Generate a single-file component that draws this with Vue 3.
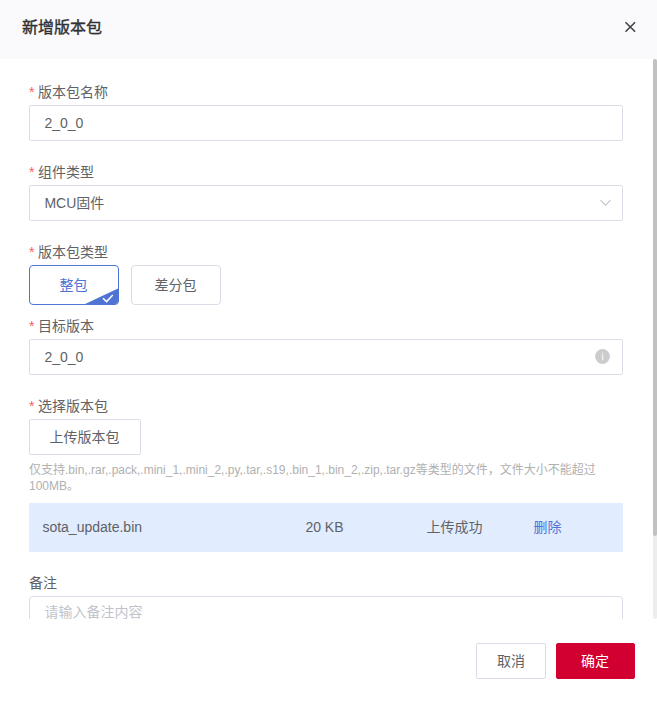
<script setup>
import { ref } from 'vue'

const name = ref('2_0_0')
const target = ref('2_0_0')
const remark = ref('')
const packType = ref('full')
const packTypes = [
  { value: 'full', label: '整包' },
  { value: 'diff', label: '差分包' },
]
</script>

<template>
  <div class="dialog">
    <header class="header">
      <h1 class="title">新增版本包</h1>
      <svg class="close" viewBox="0 0 12 12"><path d="M1.5 1.2 11.1 10.8M11.1 1.2 1.5 10.8" /></svg>
    </header>

    <div class="body">
      <form class="form">
        <div class="item">
          <label class="label required">版本包名称</label>
          <input v-model="name" class="input" />
        </div>
        <div class="item">
          <label class="label required">组件类型</label>
          <div class="input select">
            <span>MCU固件</span>
            <svg class="chevron" viewBox="0 0 12 8"><path d="M1.5 1.2 6.5 6.2 11.5 1.2" /></svg>
          </div>
        </div>
        <div class="item tight">
          <label class="label required">版本包类型</label>
          <div class="types">
            <div
              v-for="t in packTypes"
              :key="t.value"
              class="type"
              :class="{ active: packType === t.value }"
              @click="packType = t.value"
            >
              {{ t.label }}
              <svg v-if="packType === t.value" class="corner" viewBox="0 0 36 18">
                <path class="corner-fill" d="M0 18 36 1V18Z" />
                <path class="corner-check" d="M20 11.3 23.6 14.6 29.8 8.1" />
              </svg>
            </div>
          </div>
        </div>
        <div class="item">
          <label class="label required">目标版本</label>
          <div class="input select">
            <span>{{ target }}</span>
            <svg class="info" viewBox="0 0 15 15">
              <circle cx="7.5" cy="7.5" r="7.4" />
              <path d="M7 4H8.3V5.3H7ZM6.4 6.2H8.3V11H7V7H6.4Z" />
            </svg>
          </div>
        </div>
        <div class="item upload">
          <label class="label required">选择版本包</label>
          <button type="button" class="btn upload-btn">上传版本包</button>
          <p class="hint">仅支持.bin,.rar,.pack,.mini_1,.mini_2,.py,.tar,.s19,.bin_1,.bin_2,.zip,.tar.gz等类型的文件，文件大小不能超过100MB。</p>
          <div class="file">
            <span>sota_update.bin</span>
            <span>20 KB</span>
            <span>上传成功</span>
            <a class="remove">删除</a>
          </div>
        </div>
        <div class="item">
          <label class="label remark-label">备注</label>
          <textarea v-model="remark" class="textarea" placeholder="请输入备注内容"></textarea>
        </div>
      </form>
      <div class="track"><div class="thumb"></div></div>
    </div>

    <footer class="footer">
      <button class="btn cancel">取消</button>
      <button class="btn confirm">确定</button>
    </footer>
  </div>
</template>

<style>
body {
  margin: 0;
  background: #fff;
}
</style>

<style scoped>
.dialog,
.dialog * {
  box-sizing: border-box;
}
.dialog {
  display: flex;
  flex-direction: column;
  width: 657px;
  height: 702px;
  background: #fff;
  color: #606266;
  font: 14px/20px "Liberation Sans", "Noto Sans CJK SC", sans-serif;
}
.header {
  display: flex;
  align-items: center;
  justify-content: space-between;
  height: 59px;
  padding: 0 21px 4px 22px;
  background: #fafafc;
}
.title {
  margin: 0;
  padding-top: 1px;
  font-size: 16px;
  line-height: 24px;
  font-weight: 400;
  -webkit-text-stroke: 0.4px #303133;
  color: #303133;
}
.close {
  width: 12px;
  height: 12px;
  margin-bottom: 1px;
  fill: none;
  stroke: #444;
  stroke-width: 1.6;
}
.body {
  display: flex;
  height: 560px;
  overflow: hidden;
}
.form {
  flex: 1;
  padding: 20px 30px 0 29px;
}
.item {
  display: flex;
  flex-direction: column;
  margin-bottom: 18px;
}
.item.tight {
  margin-bottom: 8px;
}
.label {
  height: 26px;
  line-height: 26px;
}
.required::before {
  content: "*";
  margin-right: 3.5px;
  color: #ff5c5c;
}
.input {
  width: 100%;
  height: 36px;
  padding: 0 14.4px;
  border: 1px solid #dcdce6;
  border-radius: 2px;
  background: #fff;
  color: #606266;
  font: inherit;
  outline: none;
}
.select {
  display: flex;
  align-items: center;
  justify-content: space-between;
  padding-right: 11px;
}
.chevron {
  width: 12px;
  height: 8px;
  fill: none;
  stroke: #c0c4cc;
  stroke-width: 1.1;
}
.info {
  width: 15px;
  height: 15px;
  margin: 0 1px 1px 0;
  fill: #ccc;
}
.info path {
  fill: #f2f2f2;
}
.types {
  display: flex;
  gap: 12px;
}
.type {
  position: relative;
  width: 90px;
  height: 40px;
  padding-right: 1.2px;
  border: 1px solid #dcdce6;
  border-radius: 4px;
  line-height: 38px;
  text-align: center;
  overflow: hidden;
}
.type.active {
  border-color: #5074d3;
  color: #5074d3;
}
.corner {
  position: absolute;
  right: -1px;
  bottom: -1px;
  width: 36px;
  height: 18px;
}
.corner-fill {
  fill: #5074d3;
}
.corner-check {
  fill: none;
  stroke: #fff;
  stroke-width: 1.5;
}
.btn {
  height: 36px;
  padding: 0;
  border: 1px solid #dcdce6;
  border-radius: 2px;
  background: #fff;
  color: #606266;
  font: inherit;
}
.upload-btn {
  width: 112px;
  padding-right: 1px;
}
.hint {
  margin: 7px 0 9px;
  font-size: 12px;
  line-height: 16px;
  color: #b0b0b0;
}
.file {
  display: grid;
  grid-template-columns: 263px 121px 107px 1fr;
  align-items: center;
  height: 49px;
  padding: 0 0 2px 13.4px;
  background: #e1ecff;
}
.remove {
  color: #5074d3;
}
.textarea {
  height: 76px;
  padding: 5px 14.4px;
  border: 1px solid #dcdce6;
  border-radius: 4px;
  color: #606266;
  font: inherit;
  resize: none;
  outline: none;
}
.textarea::placeholder {
  color: #c0c4cc;
}
.track {
  width: 4px;
  height: 560px;
  border-radius: 2px;
  background: #ededed;
}
.thumb {
  height: 477px;
  border-radius: 2px;
  background: #c1c1c1;
}
.footer {
  display: flex;
  justify-content: flex-end;
  gap: 10px;
  padding: 24px 22px 23px;
}
.cancel {
  width: 70px;
}
.confirm {
  width: 79px;
  padding-right: 1px;
  border-color: #d20030;
  background: #d20030;
  color: #fff;
}
</style>
